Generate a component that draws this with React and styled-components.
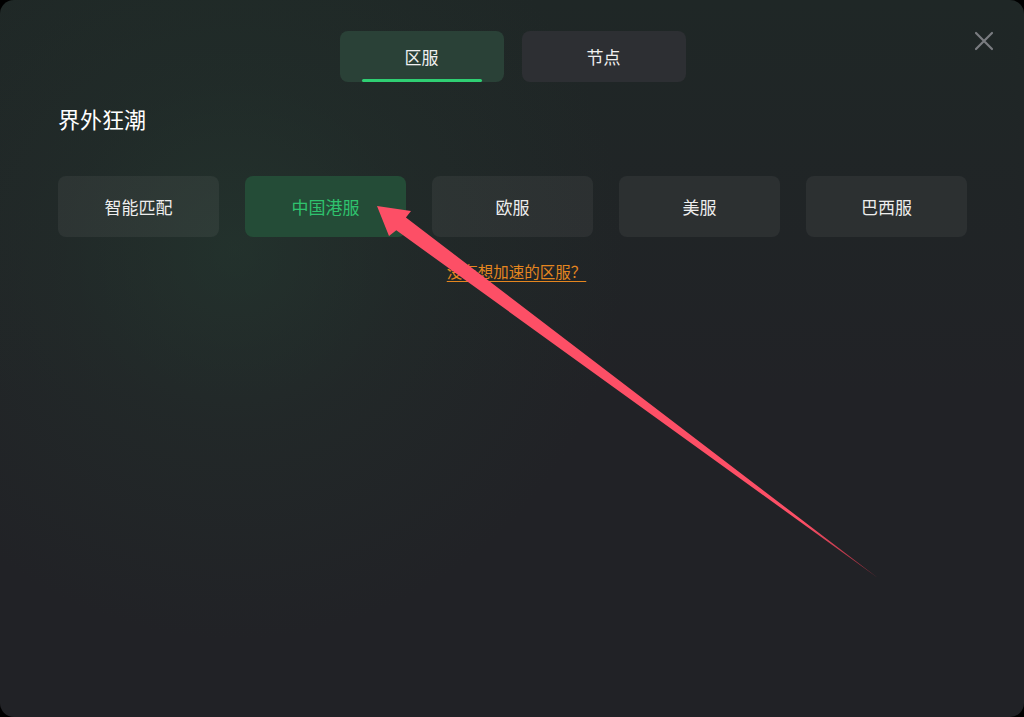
import React from 'react';
import styled, { createGlobalStyle } from 'styled-components';

const GlobalStyle = createGlobalStyle`
  html, body {
    margin: 0;
    padding: 0;
    background: #000;
  }
  body {
    font-family: "Noto Sans CJK SC", "Noto Sans", sans-serif;
  }
`;

const regions = ['智能匹配', '中国港服', '欧服', '美服', '巴西服'];

const App = () => {
  return (
    <>
      <GlobalStyle />
      <Screen>
        <Panel>
          <CloseButton aria-label="close">
            <svg width="20" height="20" viewBox="0 0 20 20">
              <path d="M2 2 L18 18 M18 2 L2 18" stroke="#7a7c80" strokeWidth="2.2" strokeLinecap="round" />
            </svg>
          </CloseButton>

          <Tabs>
            <Tab $active>区服</Tab>
            <Tab>节点</Tab>
          </Tabs>

          <GameTitle>界外狂潮</GameTitle>

          <RegionGrid>
            {regions.map((name) => (
              <RegionButton key={name} $active={name === '中国港服'}>
                {name}
              </RegionButton>
            ))}
          </RegionGrid>

          <HelpLink href="#">没有想加速的区服？</HelpLink>

          <Arrow width="1024" height="717" viewBox="0 0 1024 717">
            <defs>
              <linearGradient id="arrowFade" x1="377" y1="206" x2="878" y2="578" gradientUnits="userSpaceOnUse">
                <stop offset="0" stopColor="#fd4f66" />
                <stop offset="0.85" stopColor="#fd4f66" />
                <stop offset="1" stopColor="#8a2a38" />
              </linearGradient>
            </defs>
            <polygon
              points="377,206 411,211 405.9,217.5 878,578 396.3,230.3 389,236"
              fill="url(#arrowFade)"
            />
          </Arrow>
        </Panel>
      </Screen>
    </>
  );
};

export default App;

// styled components
const Screen = styled.div`
  width: 1024px;
  height: 717px;
  background: #000;
`;

const Panel = styled.div`
  position: relative;
  box-sizing: border-box;
  width: 1024px;
  height: 717px;
  border-radius: 14px;
  overflow: hidden;
  padding: 31px 57px 0 58px;
  display: flex;
  flex-direction: column;
  background:
    radial-gradient(circle at 235px 250px, rgba(38, 66, 52, 0.45) 0px, rgba(36, 56, 47, 0.28) 170px, rgba(33, 34, 38, 0) 390px),
    linear-gradient(180deg, #1f2726 0%, #212226 55%, #212226 100%);
`;

const CloseButton = styled.button`
  all: unset;
  position: absolute;
  top: 31px;
  right: 30px;
  width: 20px;
  height: 20px;
  cursor: pointer;
  display: flex;
`;

const Tabs = styled.div`
  display: flex;
  justify-content: center;
  gap: 18px;
`;

const Tab = styled.div`
  position: relative;
  width: 164px;
  height: 51px;
  border-radius: 8px;
  display: flex;
  align-items: center;
  justify-content: center;
  font-size: 17px;
  color: #f0f0f0;
  background: ${(p) => (p.$active ? '#2a4137' : '#2d2f33')};

  &::after {
    content: '';
    display: ${(p) => (p.$active ? 'block' : 'none')};
    position: absolute;
    left: 22px;
    right: 22px;
    bottom: 0;
    height: 3px;
    border-radius: 2px;
    background: #2fcf73;
  }
`;

const GameTitle = styled.h2`
  margin: 21px 0 0;
  font-size: 22px;
  line-height: 30px;
  font-weight: 400;
  color: #ffffff;
`;

const RegionGrid = styled.div`
  margin-top: 43px;
  display: grid;
  grid-template-columns: repeat(5, 161px);
  gap: 26px;
`;

const RegionButton = styled.div`
  height: 61px;
  border-radius: 8px;
  display: flex;
  align-items: center;
  justify-content: center;
  font-size: 17px;
  color: ${(p) => (p.$active ? '#2fc36e' : '#ededed')};
  background: ${(p) => (p.$active ? '#244c37' : 'rgba(255, 255, 255, 0.055)')};
`;

const HelpLink = styled.a`
  align-self: center;
  margin: 24px 0 0 8px;
  font-size: 15.5px;
  line-height: 20px;
  color: #e5861f;
  text-decoration: underline;
  text-underline-offset: 3px;
`;

const Arrow = styled.svg`
  position: absolute;
  left: 0;
  top: 0;
  pointer-events: none;
`;
